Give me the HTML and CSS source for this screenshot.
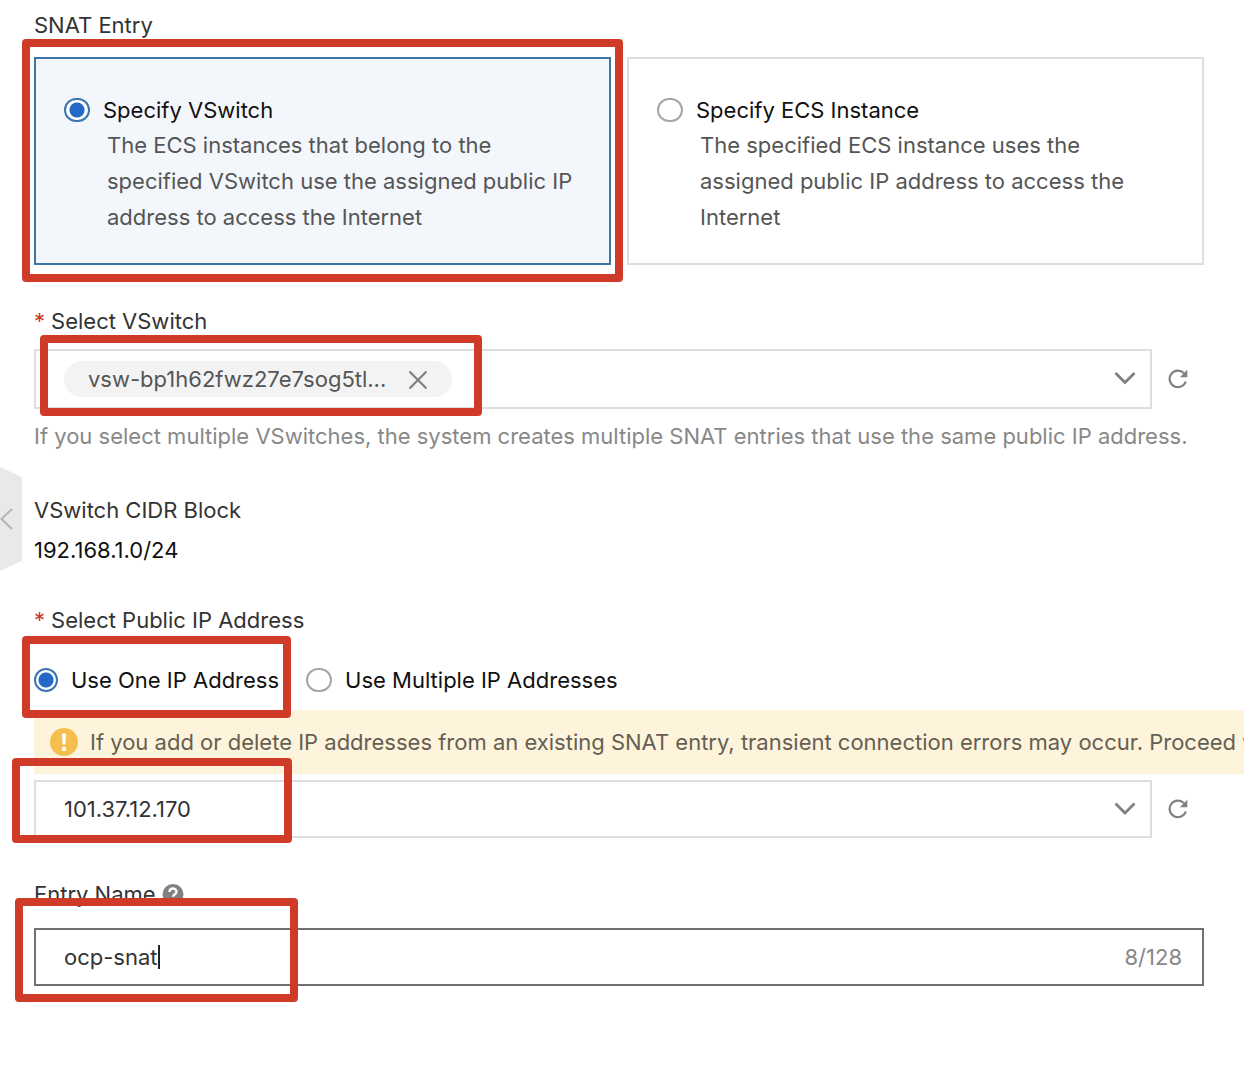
FILE: index.html
```html
<!DOCTYPE html>
<html lang="en">
<head>
<meta charset="utf-8">
<meta name="viewport" content="width=device-width, initial-scale=1">
<title>Create SNAT Entry</title>
<link rel="stylesheet" href="styles.css">
</head>
<body>
<button class="drawer-handle" type="button" aria-label="Collapse panel">
  <svg width="14" height="24" viewBox="0 0 14 24" fill="none" stroke="currentColor" stroke-width="2"><path d="M12 2 1.500 12 12 22"/></svg>
</button>
<form class="form">
  <section class="field field-scope">
    <h2 class="label">SNAT Entry</h2>
    <div class="cards">
      <div class="card card-selected">
        <label class="choice"><input class="radio" type="radio" name="scope" checked>Specify VSwitch</label>
        <p class="card-text">The ECS instances that belong to the specified VSwitch use the assigned public IP address to access the Internet</p>
        <span class="mark mark-card"></span>
      </div>
      <div class="card">
        <label class="choice"><input class="radio" type="radio" name="scope">Specify ECS Instance</label>
        <p class="card-text">The specified ECS instance uses the assigned public IP address to access the Internet</p>
      </div>
    </div>
  </section>

  <section class="field field-vswitch">
    <h2 class="label"><span class="required">*</span>Select VSwitch</h2>
    <div class="picker">
      <div class="box box-tags">
        <span class="tag">vsw-bp1h62fwz27e7sog5tl...
          <button class="icon-button" type="button" aria-label="Remove">
            <svg width="20" height="20" viewBox="0 0 20 20" fill="none" stroke="currentColor" stroke-width="2.200"><path d="m1.500 2.500 17 17M18.500 2.500l-17 17"/></svg>
          </button>
        </span>
        <button class="icon-button arrow" type="button" aria-label="Show VSwitches">
          <svg width="22" height="14" viewBox="0 0 22 14" fill="none" stroke="currentColor" stroke-width="2.800"><path d="m1.500 1 9.500 9.500 9.500-9.500"/></svg>
        </button>
        <span class="mark mark-tag"></span>
      </div>
      <button class="icon-button refresh" type="button" aria-label="Refresh VSwitches">
        <svg width="20" height="20" viewBox="0 0 20 20" fill="none" stroke="currentColor" stroke-width="2.200"><path d="M16 4.200A8.300 8.300 0 1 0 17.800 12.500"/><path d="M19.300 .8v7.400h-7.400z" fill="currentColor" stroke="none"/></svg>
      </button>
    </div>
    <p class="hint">If you select multiple VSwitches, the system creates multiple SNAT entries that use the same public IP address.</p>
  </section>

  <section class="field field-cidr">
    <h2 class="label">VSwitch CIDR Block</h2>
    <p class="value">192.168.1.0/24</p>
  </section>

  <section class="field field-ip">
    <h2 class="label"><span class="required">*</span>Select Public IP Address</h2>
    <div class="choices">
      <label class="choice choice-marked"><input class="radio" type="radio" name="ip-mode" checked>Use One IP Address<span class="mark mark-choice"></span></label>
      <label class="choice"><input class="radio" type="radio" name="ip-mode">Use Multiple IP Addresses</label>
    </div>
    <div class="alert">
      <svg class="alert-icon" width="28" height="28" viewBox="0 0 28 28"><circle cx="14" cy="14" r="14" fill="#f4bf4f"/><path d="M12 5.500h4l-.5 11h-3z" fill="#fff"/><circle cx="14" cy="21" r="2.200" fill="#fff"/></svg>
      <span>If you add or delete IP addresses from an existing SNAT entry, transient connection errors may occur. Proceed with caution.</span>
    </div>
    <div class="picker">
      <div class="select-wrap">
        <select class="box select" aria-label="Public IP address"><option>101.37.12.170</option></select>
        <svg class="select-arrow" width="22" height="14" viewBox="0 0 22 14" fill="none" stroke="currentColor" stroke-width="2.800"><path d="m1.500 1.500 9.500 9.500 9.500-9.500"/></svg>
        <span class="mark mark-select"></span>
      </div>
      <button class="icon-button refresh" type="button" aria-label="Refresh IP addresses">
        <svg width="20" height="20" viewBox="0 0 20 20" fill="none" stroke="currentColor" stroke-width="2.200"><path d="M16 4.200A8.300 8.300 0 1 0 17.800 12.500"/><path d="M19.300 .8v7.400h-7.400z" fill="currentColor" stroke="none"/></svg>
      </button>
    </div>
  </section>

  <section class="field field-name">
    <div class="label label-help">
      <label for="entry-name">Entry Name</label>
      <svg width="22" height="22" viewBox="0 0 22 22" fill="none"><circle cx="11" cy="11.500" r="10.500" fill="#808080"/><path d="M7.500 9.100C7.500 4.500 14.500 4.500 14.500 8.800c0 2.500-3.500 2.400-3.500 5" stroke="#fff" stroke-width="2.500"/><circle cx="11" cy="17" r="1.500" fill="#fff"/></svg>
    </div>
    <div class="box box-name">
      <input class="name-input" id="entry-name" type="text" value="ocp-snat" maxlength="128">
      <span class="caret"></span>
      <span class="count">8/128</span>
      <span class="mark mark-name"></span>
    </div>
  </section>
</form>
</body>
</html>
```
FILE: styles.css
```css
* {
  box-sizing: border-box;
}

body {
  margin: 0;
  background: #fff;
  color: #333;
  font: 22px/36px Inter, "Liberation Sans", sans-serif;
  overflow-x: hidden;
}

h2,
p {
  margin: 0;
  font: inherit;
}

button,
input,
select {
  margin: 0;
  color: inherit;
  font: inherit;
}

.form {
  display: flex;
  flex-direction: column;
  gap: 38px;
  padding: 7px 40px 40px 34px;
}

.field {
  display: flex;
  flex-direction: column;
  gap: 12px;
}

.field-scope {
  gap: 14px;
}

.field-vswitch {
  gap: 10px;
}

.field-cidr {
  gap: 4px;
  margin-bottom: -4px;
}

.field-name {
  gap: 16px;
}

.required {
  margin-right: 6px;
  color: #c9392a;
}

/* Option cards */
.cards {
  display: grid;
  grid-template-columns: 1fr 1fr;
  gap: 16px;
}

.card {
  position: relative;
  padding: 34px 28px 28px;
  border: 2px solid #dedede;
}

.card-selected {
  border-color: #3b76a8;
  background: #f3f7fc;
}

.card-text {
  padding-left: 43px;
  color: #555;
}

.choice {
  display: flex;
  align-items: center;
  gap: 13px;
  color: #111;
  line-height: 34px;
}

.radio {
  appearance: none;
  flex: none;
  width: 26px;
  height: 24px;
  border: 2px solid #a6a6a6;
  border-radius: 12px;
  background: #fff;
}

.radio:checked {
  border-color: #3c75b0;
  background: radial-gradient(circle, #2468c8 7px, #fff 8px);
}

.choices {
  display: flex;
  gap: 27px;
  padding: 13px 0 1px;
}

.choice-marked {
  position: relative;
}

.choice-marked .radio {
  width: 24px;
}

/* Pickers */
.picker {
  display: flex;
}

.box {
  display: flex;
  align-items: center;
  width: 100%;
  height: 58px;
  padding: 0 14px 0 28px;
  border: 2px solid #dedede;
  border-radius: 0;
  background: #fff;
}

.box-tags {
  position: relative;
  flex: 1;
  height: 60px;
}

.tag {
  display: flex;
  align-items: center;
  gap: 22px;
  padding: 0 24px;
  border-radius: 18px;
  background: #f3f3f3;
  color: #555;
}

.icon-button {
  display: flex;
  align-items: center;
  justify-content: center;
  padding: 0;
  border: 0;
  background: none;
  color: #808080;
}

.arrow {
  margin-left: auto;
}

.refresh {
  flex: none;
  width: 52px;
}

.select-wrap {
  position: relative;
  flex: 1;
}

.select {
  appearance: none;
}

.select-arrow {
  position: absolute;
  top: 22px;
  right: 16px;
  color: #808080;
  pointer-events: none;
}

.hint {
  margin-top: -1px;
  color: #888;
}

.value {
  color: #111;
}

/* Warning strip runs to the panel's edge */
.alert {
  display: flex;
  align-items: center;
  gap: 12px;
  height: 64px;
  margin: 0 -40px -6px 0;
  padding-left: 16px;
  overflow: hidden;
  background: #fef4dc;
  color: #655f53;
  white-space: nowrap;
}

.alert-icon {
  flex: none;
}

/* Entry name */
.label-help {
  display: flex;
  align-items: center;
  gap: 6px;
}

.box-name {
  position: relative;
  padding-right: 20px;
  border-color: #707070;
}

.name-input {
  field-sizing: content;
  padding: 0;
  border: 0;
  outline: 0;
  background: none;
}

.caret {
  width: 2px;
  height: 24px;
  background: #222;
}

.count {
  margin-left: auto;
  color: #888;
}

/* Red highlight frames over the form */
.mark {
  position: absolute;
  z-index: 1;
  border: 8px solid #cf3a29;
  border-radius: 4px;
  pointer-events: none;
}

.mark-card {
  inset: -20px -14px -19px -14px;
}

.mark-tag {
  top: -16px;
  left: 4px;
  width: 442px;
  height: 81px;
}

.mark-choice {
  inset: -27px -12px -21px -12px;
}

.mark-select {
  top: -22px;
  left: -22px;
  width: 280px;
  height: 85px;
}

.mark-name {
  top: -32px;
  left: -21px;
  width: 283px;
  height: 104px;
}

.drawer-handle {
  position: absolute;
  top: 467px;
  left: 0;
  display: flex;
  align-items: center;
  width: 22px;
  height: 104px;
  padding: 0;
  border: 0;
  background: #e9e9e9;
  color: #b5b5b5;
  clip-path: polygon(0 0, 100% 10px, 100% 94px, 0 100%);
}
```
